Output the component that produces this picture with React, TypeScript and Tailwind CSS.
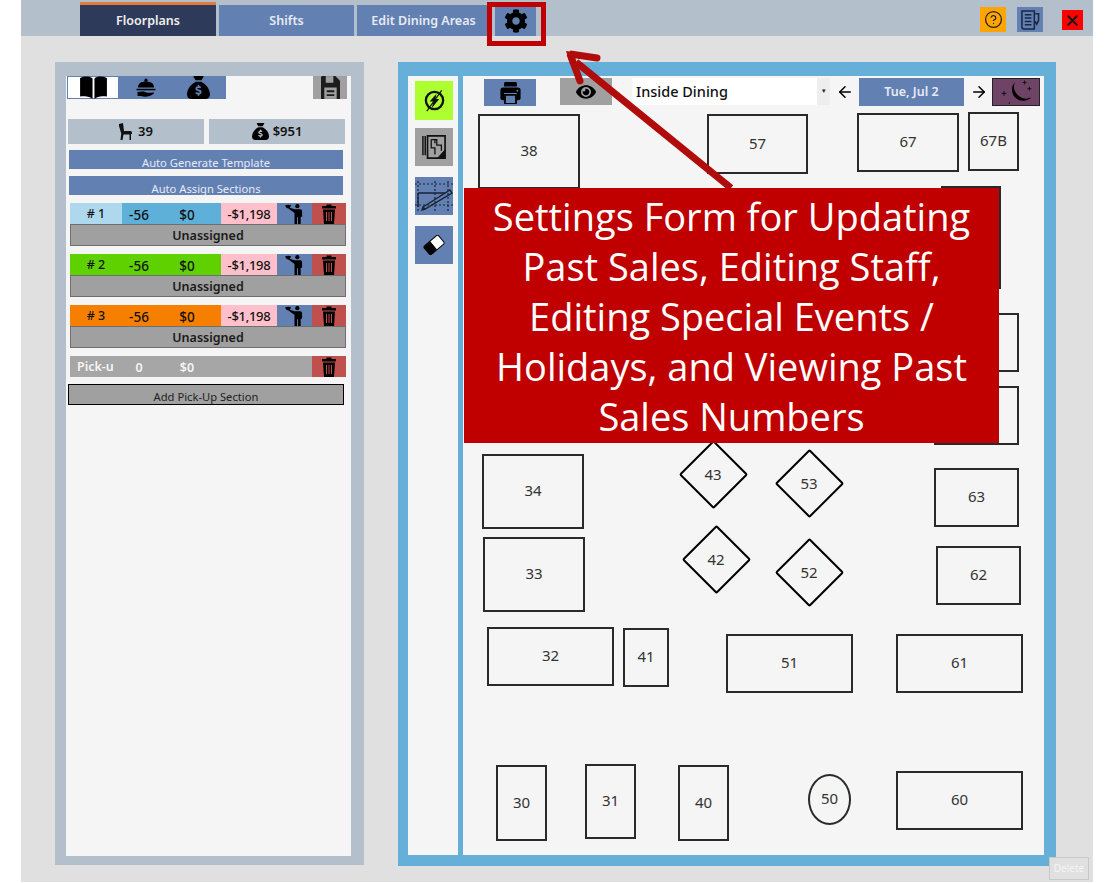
import { FaCog, FaEye } from 'react-icons/fa'
import { FaSackDollar, FaXmark } from 'react-icons/fa6'
import { ArrowLeft, ArrowRight, CircleHelp } from 'lucide-react'

const uiFont = "[font-family:'Noto_Sans','Open_Sans',sans-serif]"

function BookIcon() {
  return (
    <svg viewBox="0 0 28 24" className="w-[27px] h-[23px]">
      <path d="M0 2 C5 0 10 0 13 2.5 V24 C10 21 5 20.5 0 21.5 Z" fill="#000" />
      <path d="M28 2 C23 0 18 0 15 2.5 V24 C18 21 23 20.5 28 21.5 Z" fill="#000" />
    </svg>
  )
}

function ClocheIcon() {
  return (
    <svg viewBox="0 0 20 20" className="w-[20px] h-[20px]">
      <circle cx="10" cy="2.2" r="1.6" fill="#000" />
      <path d="M2 9.5 C2 5.5 5 3.5 10 3.5 C15 3.5 18 5.5 18 9.5 Z" fill="#000" />
      <path d="M0.5 10.8 H19.5 V12.3 H0.5 Z" fill="#000" />
      <path d="M1.5 14 C6 13 9 13.5 11 14.8 H15.5 C18.5 13.8 19 15 17 16.2 C14 18.5 9 19.5 5 18 L1.5 18 Z" fill="#000" />
    </svg>
  )
}

function SaveIcon() {
  return (
    <svg viewBox="0 0 20 24" className="w-[19px] h-[23px]">
      <path d="M1 0 H15 L20 5 V24 H0 V1 Z" fill="#1c1c1c" />
      <path d="M5 0 H13 V7 H5 Z" fill="#a0a0a0" />
      <path d="M3.5 12 H16.5 V24 H3.5 Z" fill="#a0a0a0" />
      <path d="M6 15 H14 V17 H6 Z M6 19 H14 V21 H6 Z" fill="#1c1c1c" />
    </svg>
  )
}

function ChairIcon() {
  return (
    <svg viewBox="0 0 13 17" className="w-[13px] h-[17px]">
      <path d="M0 1 L4 0 L5 8 H11.5 Q13 8 13 9.5 V11 H12 V17 H10.5 V11.5 H4.5 L3.5 17 H1.5 L2.2 10.5 L0 3 Z" fill="#111" />
    </svg>
  )
}

function WaiterIcon() {
  return (
    <svg viewBox="0 0 20 21" className="w-[19px] h-[20px]">
      <circle cx="13" cy="2.3" r="2.2" fill="#000" />
      <path d="M0 1.5 C2 0.5 5 0.5 6.5 1.5 L5 4 L10 5.5 H16 Q18 5.5 18 7.5 V13.5 H16.5 V21 H13.7 V14 H12.7 V21 H10 V9.5 L4 5 L1.5 4 Z" fill="#000" />
    </svg>
  )
}

function TrashIcon() {
  return (
    <svg viewBox="0 0 14 20" className="w-[14px] h-[20px]">
      <path d="M4.5 2 V0.5 H9.5 V2 H14 V4.5 H0 V2 Z" fill="#000" />
      <path d="M1 5.5 H13 L12 20 H2 Z" fill="#000" />
      <path d="M4.5 8 V17 M7 8 V17 M9.5 8 V17" stroke="#c0504d" strokeWidth="1" />
    </svg>
  )
}

function EraserIcon() {
  return (
    <svg viewBox="0 0 24 20" className="w-[24px] h-[20px]">
      <g transform="rotate(-40 12 10)">
        <rect x="2" y="4" width="20" height="12" rx="2.5" fill="#000" />
        <path d="M11.5 5 H20 Q21 5 21 6 V14 Q21 15 20 15 H11.5 Z" fill="#fff" />
      </g>
    </svg>
  )
}

function PrintIcon() {
  return (
    <svg viewBox="0 0 22 24" className="w-[21px] h-[22px]">
      <path d="M5 0 H17 Q18 0 18 2 V5 H4 V2 Q4 0 5 0 Z" fill="#000" />
      <path d="M3 6 H19 Q22 6 22 9 V18 Q22 20 19 20 H18 V12 H4 V20 H3 Q0 20 0 18 V9 Q0 6 3 6 Z" fill="#000" />
      <path d="M5 14 H17 V23 Q17 24 16 24 H6 Q5 24 5 23 Z" fill="none" stroke="#000" strokeWidth="2" />
      <circle cx="18.5" cy="9.5" r="1" fill="#6380b3" />
    </svg>
  )
}

function PowerBoltIcon() {
  return (
    <svg viewBox="0 0 24 24" className="w-[23px] h-[23px]">
      <circle cx="12" cy="12" r="9" fill="none" stroke="#111" strokeWidth="2.4" />
      <path d="M14 5 L7 13 H11 L9 20 L17 10.5 H13 Z" fill="#111" />
      <path d="M19.5 1.5 L4 23" stroke="#111" strokeWidth="1.2" />
    </svg>
  )
}

function PlanIcon() {
  return (
    <svg viewBox="0 0 26 28" className="w-[24px] h-[26px]" fill="none" stroke="#111">
      <path d="M1 2 V23 M3.5 2 V23" strokeWidth="1.6" />
      <path d="M6 2 H25 V26 H6 Z" strokeWidth="1.8" />
      <path d="M10 6 H16 V12 H21 V18 M10 6 V15 H14 V22 M14 10 V6" strokeWidth="1.4" />
      <path d="M17 26 L25 17 V26 Z" fill="#111" />
    </svg>
  )
}

function GridPenIcon() {
  return (
    <svg viewBox="0 0 38 30" className="w-[38px] h-[30px]" fill="none" stroke="#1b2236">
      <path d="M0 3 H38 M0 24 H38 M3 0 V30 M20 0 V30 M33 0 V30" strokeWidth="1.2" strokeDasharray="2 2" />
      <path d="M3 12 H30 M3 12 V26" strokeWidth="1.4" />
      <path d="M8 26 L35 9 L37 12 L10 28 Z M8 26 L7 29 L10 28" strokeWidth="1.4" />
    </svg>
  )
}

function NotesIcon() {
  return (
    <svg viewBox="0 0 20 22" className="w-[19px] h-[21px]" fill="none" stroke="#1a2740" strokeWidth="1.6">
      <path d="M1 2 H14 V21 H3 Q1 21 1 19 Z" />
      <path d="M4 6 H11 M4 9.5 H11 M4 13 H11 M4 16.5 H11" />
      <path d="M15 5 H18.5 V12 L16.5 16 L15 13" />
    </svg>
  )
}

function MoonIcon() {
  return (
    <svg viewBox="0 0 48 28" className="w-[47px] h-[27px]">
      <path d="M23 3 A11.5 11.5 0 1 0 40 19 A12.5 12.5 0 0 1 23 3 Z" fill="#000" />
      <path d="M9 15 h5 M11.5 12.5 v5 M31 3.5 h4 M33 1.5 v4 M36 10 h4 M38 8 v4" stroke="#111" strokeWidth="1" />
      <circle cx="17" cy="25" r="0.8" fill="#111" />
    </svg>
  )
}

type SectionProps = {
  label: string
  labelClass: string
  statClass: string
}

function Section({ label, labelClass, statClass }: SectionProps) {
  return (
    <div className="ml-[4px] w-[276px] mb-[8px]">
      <div className="flex h-[21px] text-[13.5px] font-medium text-[#111]">
        <div className={`w-[52px] pt-[2px] flex items-center justify-center text-[12.5px] ${labelClass}`}>{label}</div>
        <div className={`w-[34px] pt-[3px] flex items-center justify-center ${statClass}`}>-56</div>
        <div className={`w-[65px] pt-[3px] pr-[3px] flex items-center justify-center ${statClass}`}>$0</div>
        <div className="w-[56px] pt-[3px] flex items-center justify-center bg-[#ffc0cb] text-[13px] tracking-[-0.3px]">-$1,198</div>
        <div className="w-[35px] flex items-center justify-center bg-[#6380b3]">
          <WaiterIcon />
        </div>
        <div className="w-[34px] flex items-center justify-center bg-[#c0504d]">
          <TrashIcon />
        </div>
      </div>
      <div className="h-[22px] pt-[2px] flex items-center justify-center bg-[#a0a0a0] border border-[#6e6e6e] text-[12.5px] font-semibold text-[#1a1a1a]">
        Unassigned
      </div>
    </div>
  )
}

function LeftPanel() {
  return (
    <div className="w-[309px] h-[803px] shrink-0 border-[#b3bfca] border-t-[14px] border-b-[9px] border-l-[11px] border-r-[13px] bg-[#f5f5f5]">
      <div className="flex h-[23px] pl-[1px]">
        <div className="w-[52px] flex items-center justify-center bg-white border border-[#6380b3]">
          <BookIcon />
        </div>
        <div className="w-[107px] flex items-center bg-[#6380b3]">
          <div className="ml-[17px]">
            <ClocheIcon />
          </div>
          <FaSackDollar className="ml-[31px] text-[23px] text-black" />
        </div>
        <div className="ml-[87px] w-[34px] flex items-center justify-center bg-[#a0a0a0]">
          <SaveIcon />
        </div>
      </div>
      <div className="flex gap-[5px] ml-[2px] mt-[20px] text-[13px] font-semibold text-[#111]">
        <div className="w-[136px] h-[25px] flex items-center justify-center gap-[6px] bg-[#b3bfca]">
          <ChairIcon />
          39
        </div>
        <div className="w-[136px] h-[25px] flex items-center justify-center gap-[4px] bg-[#b3bfca]">
          <FaSackDollar className="text-[17px] text-black" />
          $951
        </div>
      </div>
      <div className="ml-[3px] mt-[6px] w-[274px] h-[19px] overflow-hidden bg-[#6380b3] text-center text-[11.2px] leading-[15px] pt-[5px] text-[#e6ebf4]">
        Auto Generate Template
      </div>
      <div className="ml-[3px] mt-[7px] mb-[8px] w-[274px] h-[19px] overflow-hidden bg-[#6380b3] text-center text-[11.2px] leading-[15px] pt-[5px] text-[#e6ebf4]">
        Auto Assign Sections
      </div>
      <Section label="# 1" labelClass="bg-[#add8ee]" statClass="bg-[#5fb0d8]" />
      <Section label="# 2" labelClass="bg-[#5fd000]" statClass="bg-[#5fd000]" />
      <Section label="# 3" labelClass="bg-[#f77f00]" statClass="bg-[#f77f00]" />
      <div className="ml-[4px] w-[276px] flex h-[21px] mt-[1px] bg-[#a6a6a6] text-[12.5px] font-semibold text-[#f5f5f5]">
        <div className="w-[52px] pl-[7px] pt-[1px] flex items-center">Pick-u</div>
        <div className="w-[34px] pt-[3px] flex items-center justify-center">0</div>
        <div className="w-[65px] pt-[3px] pr-[3px] flex items-center justify-center">$0</div>
        <div className="ml-auto w-[34px] flex items-center justify-center bg-[#c0504d]">
          <TrashIcon />
        </div>
      </div>
      <div className="ml-[2px] mt-[7px] w-[276px] h-[21px] overflow-hidden bg-[#a0a0a0] border border-black text-center text-[11.2px] leading-[15px] pt-[4px] text-[#222]">
        Add Pick-Up Section
      </div>
    </div>
  )
}

const tables = [
  { label: '38', className: 'left-[15px] top-[38px] w-[102px] h-[75px]' },
  { label: '57', className: 'left-[244px] top-[38px] w-[101px] h-[60px]' },
  { label: '67', className: 'left-[394px] top-[37px] w-[102px] h-[59px]' },
  { label: '67B', className: 'left-[505px] top-[36px] w-[51px] h-[59px]' },
  { label: '', className: 'left-[478px] top-[110px] w-[60px] h-[103px]' },
  { label: '', className: 'left-[471px] top-[237px] w-[85px] h-[59px]' },
  { label: '', className: 'left-[471px] top-[310px] w-[85px] h-[59px]' },
  { label: '34', className: 'left-[19px] top-[378px] w-[102px] h-[75px]' },
  { label: '33', className: 'left-[20px] top-[461px] w-[102px] h-[75px]' },
  { label: '63', className: 'left-[471px] top-[392px] w-[85px] h-[59px]' },
  { label: '62', className: 'left-[473px] top-[470px] w-[85px] h-[59px]' },
  { label: '32', className: 'left-[24px] top-[551px] w-[127px] h-[59px]' },
  { label: '41', className: 'left-[160px] top-[552px] w-[46px] h-[59px]' },
  { label: '51', className: 'left-[263px] top-[558px] w-[127px] h-[59px]' },
  { label: '61', className: 'left-[433px] top-[558px] w-[127px] h-[59px]' },
  { label: '30', className: 'left-[33px] top-[689px] w-[51px] h-[76px]' },
  { label: '31', className: 'left-[122px] top-[688px] w-[51px] h-[75px]' },
  { label: '40', className: 'left-[215px] top-[689px] w-[51px] h-[76px]' },
  { label: '50', className: 'left-[345px] top-[698px] w-[43px] h-[51px] rounded-[50%]' },
  { label: '60', className: 'left-[433px] top-[695px] w-[127px] h-[59px]' },
]

const diamonds = [
  { label: '43', className: 'left-[216px] top-[365px]' },
  { label: '53', className: 'left-[312px] top-[374px]' },
  { label: '42', className: 'left-[219px] top-[450px]' },
  { label: '52', className: 'left-[312px] top-[463px]' },
]

function FloorCanvas() {
  return (
    <div className="w-[581px] h-[779px] relative bg-[#f5f5f5]">
      <div className="flex items-start pt-[2px] h-[30px]">
        <div className="ml-[21px] mt-[1px] w-[52px] h-[27px] flex items-center justify-center bg-[#6380b3]">
          <PrintIcon />
        </div>
        <div className="ml-[24px] w-[52px] h-[27px] flex items-center justify-center bg-[#a0a0a0]">
          <FaEye className="text-[20px] text-black" />
        </div>
        <div className="ml-[20px] w-[198px] h-[27px] flex items-center bg-white pl-[4px] text-[14.5px] font-medium text-[#111]">
          <span className="flex-1">Inside Dining</span>
          <span className="w-[13px] h-full flex items-center justify-center bg-[#eeeeee] text-[7px] text-[#222]">▾</span>
        </div>
        <ArrowLeft className="ml-[6px] mt-[5px] w-[18px] h-[18px] text-black" />
        <div className="ml-[5px] w-[105px] h-[28px] flex items-center justify-center bg-[#6380b3] text-[12.5px] font-semibold text-[#e6ebf4]">
          Tue, Jul 2
        </div>
        <ArrowRight className="ml-[6px] mt-[5px] w-[18px] h-[18px] text-black" />
        <div className="ml-[4px] w-[48px] h-[28px] flex items-center justify-center bg-[#6f4365] border border-[#222]">
          <MoonIcon />
        </div>
      </div>
      {tables.map(t => (
        <div
          key={t.className}
          className={`absolute flex items-center justify-center pb-[2px] border-2 border-[#2a2a2a] text-[15px] text-[#333] ${t.className}`}
        >
          {t.label}
        </div>
      ))}
      {diamonds.map(d => (
        <div key={d.label} className={`absolute w-[68px] h-[68px] flex items-center justify-center pb-[2px] text-[15px] text-[#333] ${d.className}`}>
          <div className="absolute w-[49px] h-[49px] rotate-45 border-2 border-black rounded-[2px]" />
          <span className="relative">{d.label}</span>
        </div>
      ))}
    </div>
  )
}

function ToolStrip() {
  return (
    <div className="w-[50px] h-[779px] bg-[#f5f5f5] pl-[7px] pt-[5px] flex flex-col">
      <div className="w-[38px] h-[39px] flex items-center justify-center bg-[#adff2f]">
        <PowerBoltIcon />
      </div>
      <div className="mt-[8px] w-[38px] h-[38px] flex items-center justify-center bg-[#a0a0a0]">
        <PlanIcon />
      </div>
      <div className="mt-[11px] w-[38px] h-[38px] flex items-center justify-center bg-[#6380b3]">
        <GridPenIcon />
      </div>
      <div className="mt-[11px] w-[38px] h-[38px] flex items-center justify-center bg-[#6380b3]">
        <EraserIcon />
      </div>
    </div>
  )
}

export default function App() {
  return (
    <div className={`w-[1114px] h-[883px] relative overflow-hidden bg-white ${uiFont}`}>
      <div className="ml-[21px] w-[1072px] h-[882px] bg-[#e0e0e0]">
        {/* Top bar */}
        <div className="h-[36px] flex items-end bg-[#b3bfca] pl-[59px] pr-[10px]">
          <div className="w-[136px] h-[34px] pt-[2px] flex items-center justify-center bg-[#2e3a59] border-t-[3px] border-[#dd7a3c] text-[12.5px] font-semibold text-[#f0f0f0]">
            Floorplans
          </div>
          <div className="ml-[3px] w-[135px] h-[31px] pt-[1px] flex items-center justify-center bg-[#6380b3] text-[12.5px] font-semibold text-[#e6ebf4]">
            Shifts
          </div>
          <div className="ml-[3px] w-[133px] h-[31px] pt-[1px] flex items-center justify-center bg-[#6380b3] text-[12.5px] font-semibold text-[#e6ebf4]">
            Edit Dining Areas
          </div>
          <div className="ml-[5px] w-[41px] h-[31px] flex items-center justify-center bg-[#6380b3]">
            <FaCog className="text-[24px] text-black" />
          </div>
          <div className="ml-auto self-start mt-[7px] flex items-start">
            <div className="w-[26px] h-[25px] flex items-center justify-center bg-[#ffa500]">
              <CircleHelp className="w-[19px] h-[19px] text-[#222]" strokeWidth={1.6} />
            </div>
            <div className="ml-[11px] w-[26px] h-[25px] flex items-center justify-center bg-[#6380b3]">
              <NotesIcon />
            </div>
            <div className="ml-[19px] mt-[3px] w-[21px] h-[20px] flex items-center justify-center bg-[#ff0000]">
              <FaXmark className="text-[17px] text-[#1a1a1a]" />
            </div>
          </div>
        </div>

        {/* Body */}
        <div className="flex gap-[34px] pl-[34px] pt-[26px]">
          <LeftPanel />
          <div className="w-[658px] h-[804px] shrink-0 flex gap-[5px] bg-[#65afd8] pl-[10px] pt-[14px]">
            <ToolStrip />
            <FloorCanvas />
          </div>
        </div>
      </div>

      {/* Delete button over the panel corner */}
      <div className="absolute left-[1049px] top-[857px] w-[40px] h-[23px] flex items-center justify-center bg-[#e0e0e0] border border-[#c8c8c8] text-[10px] text-[#f5f5f5]">
        Delete
      </div>

      {/* Annotation: highlight box, arrow and callout */}
      <div className="absolute left-[487px] top-[2px] w-[59px] h-[44px] border-[5px] border-[#c00000]" />
      <svg className="absolute left-[550px] top-[40px] w-[200px] h-[160px]" viewBox="0 0 200 160" fill="none">
        <path d="M181 148 L26 22" stroke="#b00c0c" strokeWidth="7" strokeLinecap="butt" />
        <path d="M47 18 L20 14 L30 41" stroke="#b00c0c" strokeWidth="7" strokeLinecap="round" strokeLinejoin="bevel" />
        <path d="M16 11 L30 13 L20 24 Z" fill="#b00c0c" />
      </svg>
      <div className="absolute left-[464px] top-[188px] w-[535px] h-[255px] flex items-center justify-center bg-[#c00000] text-center text-[38px] leading-[50px] text-white [font-family:'Open_Sans',sans-serif]">
        <div>
          Settings Form for Updating
          <br />
          Past Sales, Editing Staff,
          <br />
          Editing Special Events /
          <br />
          Holidays, and Viewing Past
          <br />
          Sales Numbers
        </div>
      </div>
    </div>
  )
}
